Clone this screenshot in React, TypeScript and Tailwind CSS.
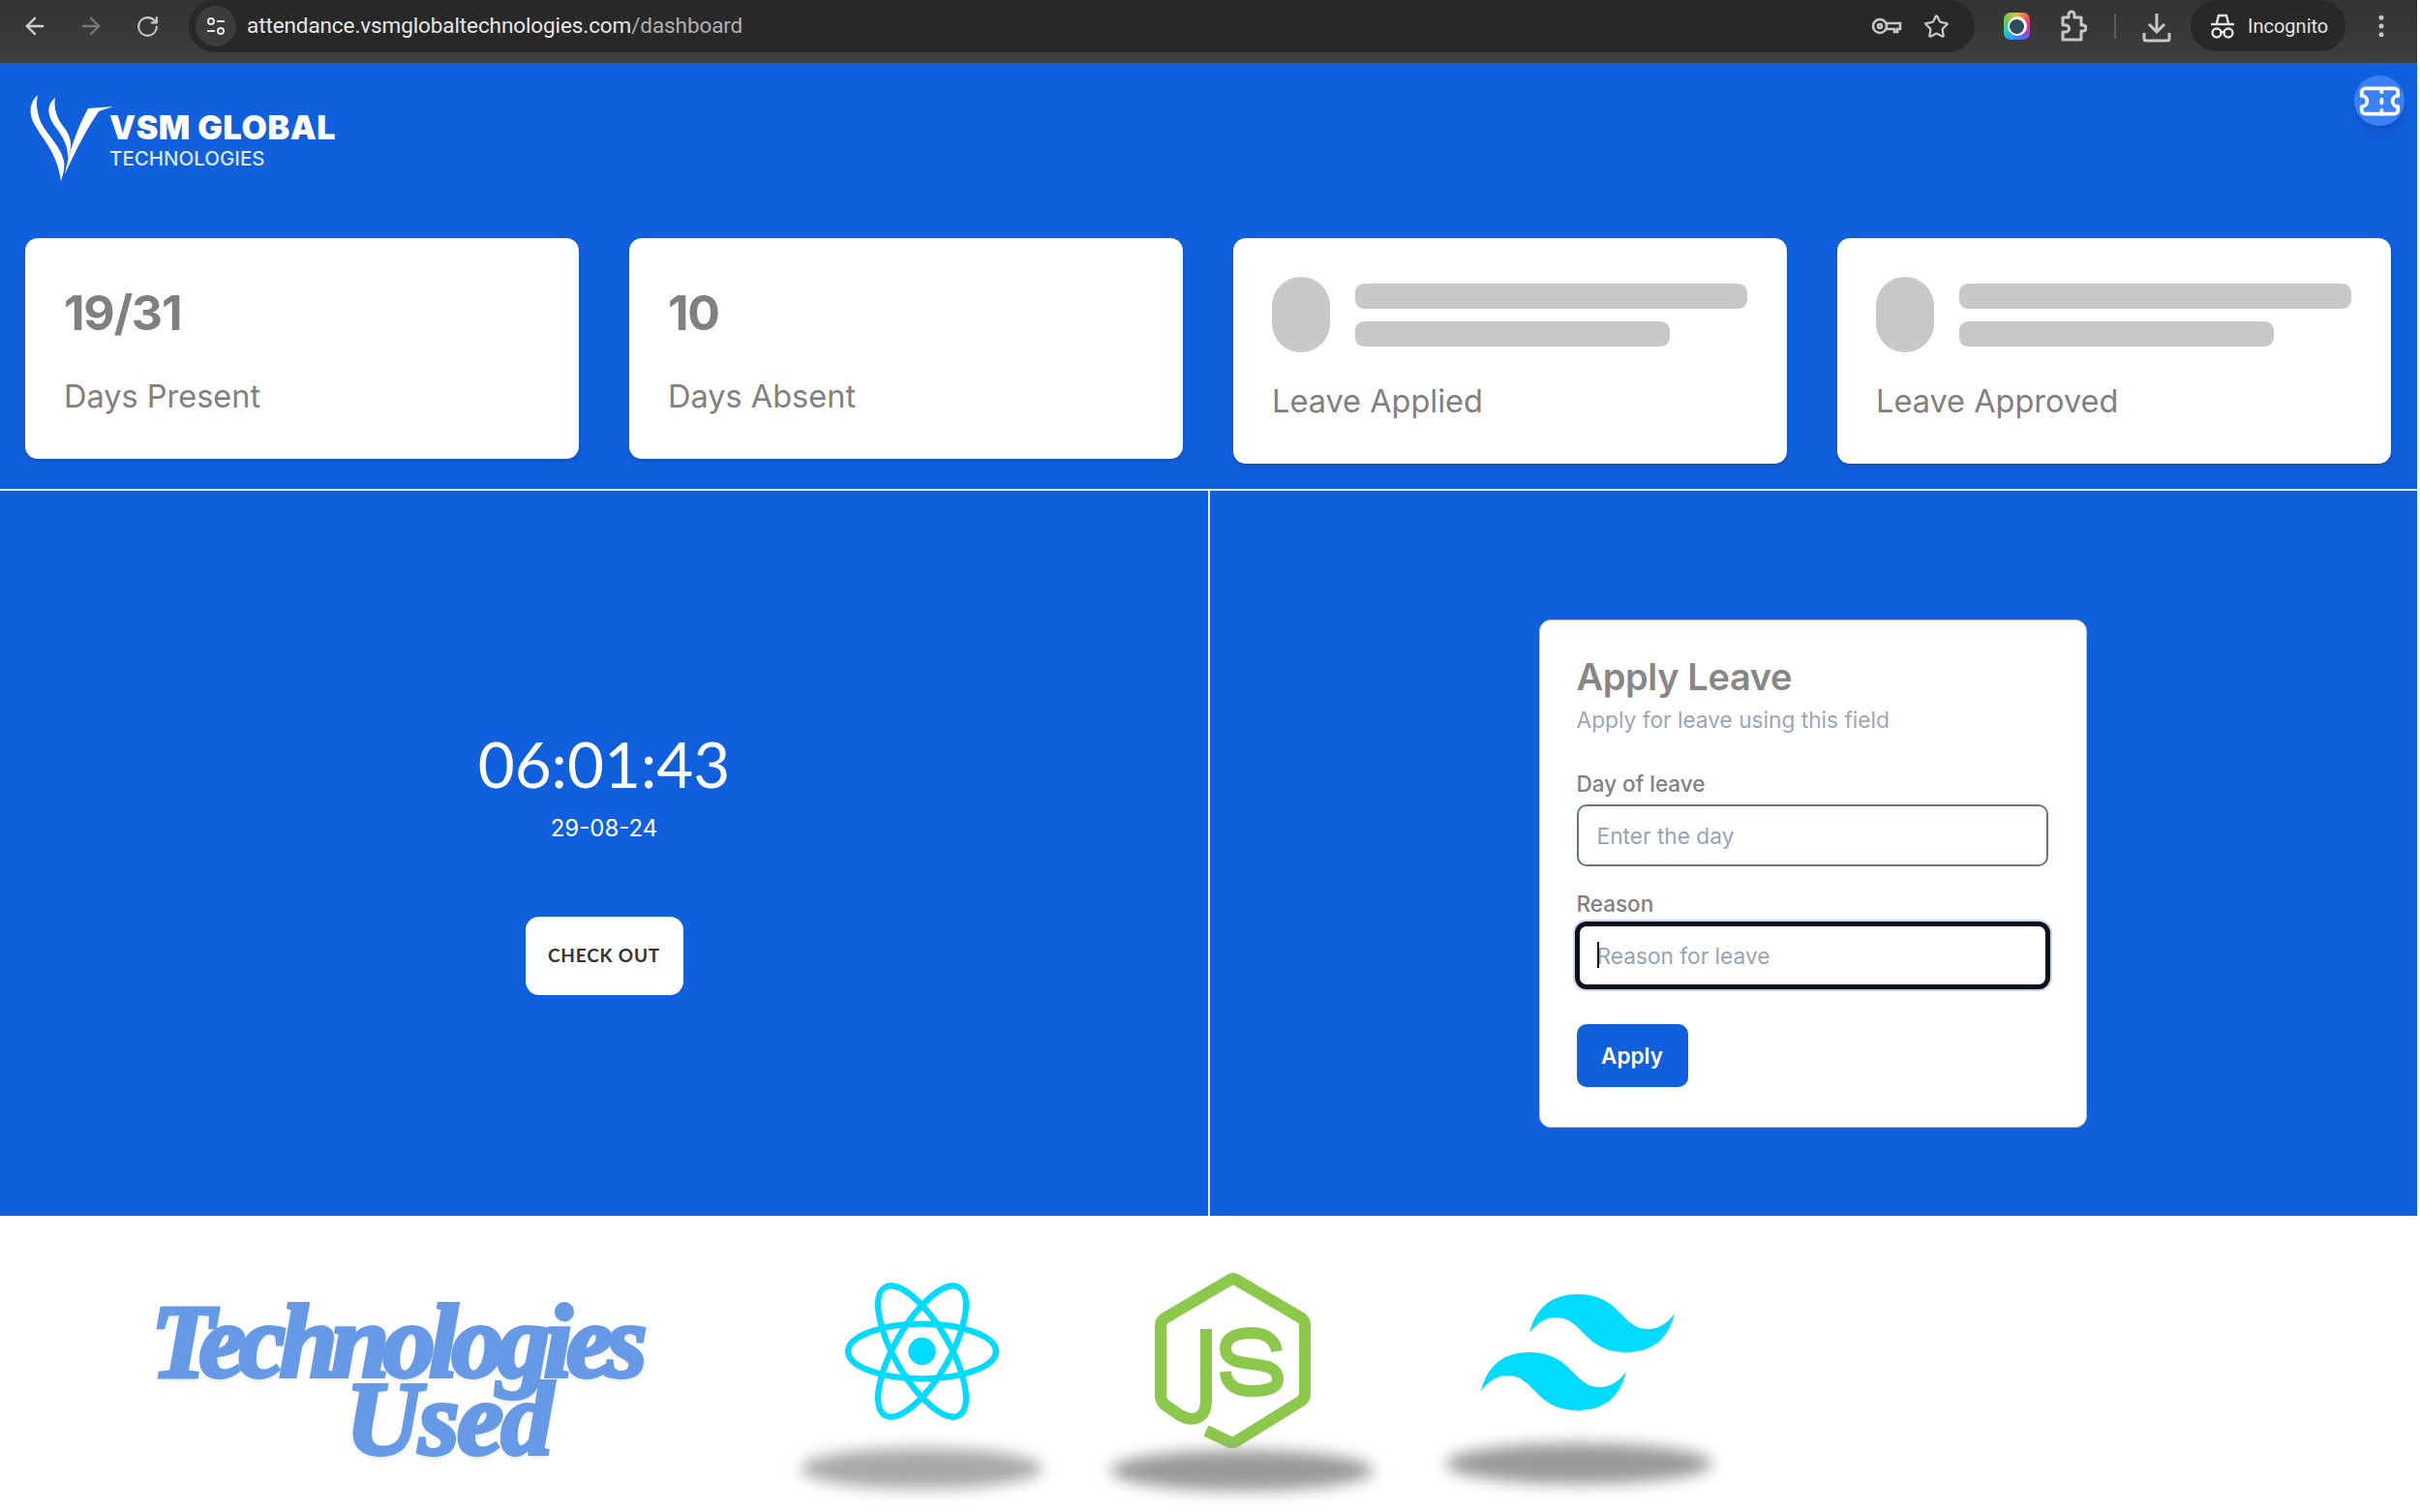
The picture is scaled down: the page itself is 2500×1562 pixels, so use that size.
import { ArrowLeft, ArrowRight, EllipsisVertical, RotateCw, Star, Ticket } from "lucide-react";

function SiteInfoIcon() {
  return (
    <svg width="24" height="24" viewBox="0 0 24 24" fill="none" stroke="#e3e3e3" strokeWidth="2">
      <circle cx="7" cy="7" r="3" />
      <path d="M13 7h8" />
      <circle cx="17" cy="17" r="3" />
      <path d="M3 17h8" />
    </svg>
  );
}

function KeyIcon() {
  return (
    <svg width="32" height="22" viewBox="0 0 32 22" fill="none" stroke="#c7c7c7" strokeWidth="2.6">
      <circle cx="9" cy="11" r="7" />
      <circle cx="9" cy="11" r="2" />
      <path d="M16 8h14v6h-3v3h-3v-3h-8" />
    </svg>
  );
}

function ExtensionIcon() {
  return (
    <svg width="28" height="34" viewBox="0 0 28 34" fill="none" stroke="#c7c7c7" strokeWidth="3" strokeLinejoin="round">
      <path d="M3 8h6V5a3 3 0 0 1 6 0v3h7v8h2a3 3 0 0 1 0 6h-2v9H3v-8h3a3 3 0 0 0 0-7H3V8z" />
    </svg>
  );
}

function DownloadIcon() {
  return (
    <svg width="30" height="32" viewBox="0 0 30 32" fill="none" stroke="#c7c7c7" strokeWidth="3">
      <path d="M15 2v18M7 13l8 8 8-8" />
      <path d="M2 22v6a2 2 0 0 0 2 2h22a2 2 0 0 0 2-2v-6" />
    </svg>
  );
}

function IncognitoIcon() {
  return (
    <svg width="26" height="28" viewBox="0 0 26 28" fill="none" stroke="#e3e3e3" strokeWidth="2.4">
      <path d="M7 11l2-8h8l2 8" />
      <path d="M1 12h24" />
      <circle cx="7" cy="21" r="4.5" />
      <circle cx="19" cy="21" r="4.5" />
      <path d="M11.5 20h3" />
    </svg>
  );
}

function BrowserBar() {
  return (
    <div className="flex h-[65px] items-start bg-gradient-to-b from-[#333333] to-[#3e3e3e] font-['Roboto',sans-serif]">
      <div className="flex h-[54px] w-[195px] items-center pl-[22px]">
        <ArrowLeft size={28} color="#d0d0d0" />
        <ArrowRight size={28} color="#777777" className="ml-[30px]" />
        <RotateCw size={25} color="#c7c7c7" className="ml-[32px]" />
      </div>
      <div className="flex h-[54px] w-[1845px] items-center rounded-r-[27px] rounded-l-[27px] bg-[#282828] pl-[7px] pr-[24px]">
        <div className="flex h-[42px] w-[42px] items-center justify-center rounded-full bg-[#3c3c3c]">
          <SiteInfoIcon />
        </div>
        <div className="ml-[11px] flex-1 text-[22.5px] tracking-[-0.1px] text-[#e6e6e6]">
          attendance.vsmglobaltechnologies.com<span className="text-[#b0b0b0]">/dashboard</span>
        </div>
        <KeyIcon />
        <Star size={27} color="#c7c7c7" strokeWidth={2} className="ml-[22px] mr-[2px]" />
      </div>
      <div className="ml-[30px] mt-[13px] flex h-[28px] w-[27px] items-center justify-center rounded-[7px] bg-[conic-gradient(#f7b733,#f0435d,#a13fd6,#3b82f6,#22c9c9,#5fd04f,#f7b733)]">
        <div className="flex h-[20px] w-[20px] items-center justify-center rounded-full bg-white">
          <div className="h-[15px] w-[15px] rounded-full bg-[#2d4a5e]" />
        </div>
      </div>
      <div className="ml-[31px] mt-[10px]">
        <ExtensionIcon />
      </div>
      <div className="ml-[28px] mt-[14px] h-[26px] w-[2px] bg-[#5c5c5c]" />
      <div className="ml-[27px] mt-[12px]">
        <DownloadIcon />
      </div>
      <div className="ml-[20px] flex h-[53px] w-[160px] items-center rounded-[27px] bg-[#282828] pl-[20px]">
        <IncognitoIcon />
        <span className="ml-[13px] text-[20px] text-[#e3e3e3]">Incognito</span>
      </div>
      <EllipsisVertical size={30} color="#c7c7c7" className="ml-[22px] mt-[12px]" />
    </div>
  );
}

function BrandLogo() {
  return (
    <div className="flex items-start">
      <svg width="90" height="90" viewBox="0 0 90 90" fill="white">
        <path d="M62 14 L88 12 L73 17 C60 36 50 56 38 82 C42 60 50 36 62 14 Z" />
        <path d="M10 0 C1 8 0 20 8 33 C16 47 30 60 34 89 C37 80 38 74 37 68 C33 52 20 42 13 28 C9 18 8 8 10 0 Z" />
        <path d="M28 3 C19 10 20 20 26 30 C33 40 42 50 41 66 C47 52 44 42 36 32 C30 24 26 14 28 3 Z" />
      </svg>
      <div className="ml-[-6px] mt-[16px] font-['Inter',sans-serif] text-white">
        <div className="text-[34px] font-black leading-[36px] tracking-[0.6px] whitespace-nowrap">VSM GLOBAL</div>
        <div className="mt-[4px] text-[20.5px] font-medium leading-[20px] text-[#dbe7ff]">TECHNOLOGIES</div>
      </div>
    </div>
  );
}

function StatCard({ value, label }: { value: string; label: string }) {
  return (
    <div className="h-[228px] w-[572px] rounded-[13px] bg-white p-[40px] shadow-md">
      <div className="mt-[7px] text-[50px] font-bold leading-[60px] tracking-[-1.2px] text-[#808080]">{value}</div>
      <div className="mt-[37px] text-[32.5px] leading-[40px] text-[#808080]">{label}</div>
    </div>
  );
}

function LoadingCard({ label }: { label: string }) {
  return (
    <div className="h-[233px] w-[572px] rounded-[13px] bg-white p-[40px] shadow-md">
      <div className="flex gap-[26px]">
        <div className="h-[78px] w-[60px] rounded-full bg-[#c8c8c8]" />
        <div className="flex flex-1 flex-col gap-[13px] pt-[7px]">
          <div className="h-[26px] w-[405px] rounded-[9px] bg-[#c8c8c8]" />
          <div className="h-[26px] w-[325px] rounded-[9px] bg-[#c8c8c8]" />
        </div>
      </div>
      <div className="mt-[31px] text-[32.5px] leading-[40px] text-[#808080]">{label}</div>
    </div>
  );
}

function ClockPanel() {
  return (
    <div className="flex flex-col items-center border-r-2 border-[#e4ecfb] pt-[242px]">
      <div className="font-['Lato',sans-serif] text-[65.5px] leading-[80px] text-white">06:01:43</div>
      <div className="mt-[11px] text-[24px] leading-[32px] text-white">29-08-24</div>
      <button className="mt-[75px] h-[81px] w-[163px] rounded-[14px] bg-white font-['Lato',sans-serif] text-[19px] font-bold tracking-[0.8px] text-[#333333]">
        CHECK OUT
      </button>
    </div>
  );
}

function LeaveForm() {
  return (
    <div className="flex justify-center pr-[2px] pt-[133px]">
      <div className="h-[525px] w-[566px] rounded-[12px] border border-[#b9c0cc] bg-white px-[38px] pt-[34px]">
        <div className="text-[38px] font-semibold leading-[48px] tracking-[-0.4px] text-[#878787]">Apply Leave</div>
        <div className="mt-[4px] text-[22.7px] leading-[34px] text-[#9aa6b8]">Apply for leave using this field</div>
        <div className="mt-[35px] text-[22.5px] font-medium leading-[28px] text-[#808080]">Day of leave</div>
        <input
          placeholder="Enter the day"
          className="mt-[7px] block h-[64px] w-[487px] rounded-[10px] border-2 border-[#6b7280] bg-white px-[19px] text-[22.7px] placeholder:text-[#94a3b8]"
        />
        <div className="mt-[25px] text-[22.5px] font-medium leading-[28px] text-[#808080]">Reason</div>
        <div className="relative mt-[4px]">
          <input
            placeholder="Reason for leave"
            className="ml-[-2px] block h-[70px] w-[491px] rounded-[12px] border-[5px] border-[#0b1020] bg-white px-[18px] text-[22.7px] ring-2 ring-[#cbd5e1] placeholder:text-[#94a3b8]"
          />
          <div className="absolute left-[21px] top-[21px] h-[27px] w-[2px] bg-[#111827]" />
        </div>
        <button className="mt-[36px] h-[65px] w-[115px] rounded-[10px] bg-[#105fdd] text-[22.5px] font-semibold text-white">
          Apply
        </button>
      </div>
    </div>
  );
}

function ReactLogo() {
  return (
    <svg width="159" height="142" viewBox="-101 -90 202 180" fill="none" stroke="#00dbff" strokeWidth="8">
      <ellipse rx="97" ry="36" />
      <ellipse rx="97" ry="36" transform="rotate(60)" />
      <ellipse rx="97" ry="36" transform="rotate(120)" />
      <circle r="18" fill="#00dbff" stroke="none" />
    </svg>
  );
}

function NodeLogo() {
  return (
    <svg width="162" height="182" viewBox="0 0 162 182" fill="none" stroke="#8cc84b" strokeWidth="12" strokeLinejoin="round">
      <path d="M53 163 L78 175 Q81 176 84 174 L150 133 Q155 130 155 125 L155 54 Q155 50 152 47 L84 7 Q81 5 78 7 L10 47 Q6 50 6 54 L6 127 Q6 132 10 136 L26 147 C40 155 53 150 53 132 L53 58" />
      <path d="M126 81 C124 68 114 62 100 62 C84 62 73 67 73 78 C73 90 84 92 100 94 C118 96 127 99 127 110 C127 118 118 122 100 122 C84 122 74 116 73 102" />
    </svg>
  );
}

function TailwindLogo() {
  return (
    <svg width="200" height="120" viewBox="0 0 54 32.4" fill="#00dbff" preserveAspectRatio="none">
      <path d="M27 0c-7.2 0-11.7 3.6-13.5 10.8 2.7-3.6 5.85-4.95 9.45-4.05 2.054.513 3.522 2.004 5.147 3.653C30.744 13.09 33.808 16.2 40.5 16.2c7.2 0 11.7-3.6 13.5-10.8-2.7 3.6-5.85 4.95-9.45 4.05-2.054-.513-3.522-2.004-5.147-3.653C36.756 3.11 33.692 0 27 0zM13.5 16.2C6.3 16.2 1.8 19.8 0 27c2.7-3.6 5.85-4.95 9.45-4.05 2.054.514 3.522 2.004 5.147 3.653C17.244 29.29 20.308 32.4 27 32.4c7.2 0 11.7-3.6 13.5-10.8-2.7 3.6-5.85 4.95-9.45 4.05-2.054-.513-3.522-2.004-5.147-3.653C23.256 19.31 20.192 16.2 13.5 16.2z" />
    </svg>
  );
}

function TechFooter() {
  return (
    <div className="flex h-[306px] bg-white">
      <div className="ml-[156px] w-[512px] pt-[90px] font-['Liberation_Serif',serif] text-[108px] font-bold italic leading-[80px] tracking-[-6.5px] text-[#6699e6] [-webkit-text-stroke:4px_#6699e6] [text-shadow:0_3px_6px_rgba(0,0,0,0.12)]">
        <div className="whitespace-nowrap">Technologies</div>
        <div className="pl-[201px] tracking-[-2.5px]">Used</div>
      </div>

      <div className="ml-[155px] flex w-[258px] flex-col items-center pt-[69px]">
        <ReactLogo />
        <div className="mt-[29px] h-[42px] w-[250px] rounded-[50%] bg-[#a8a8a8] blur-[8px]" />
      </div>

      <div className="ml-[66px] flex w-[276px] flex-col pt-[59px]">
        <div className="ml-[46px]">
          <NodeLogo />
        </div>
        <div className="mt-[1px] h-[42px] w-[272px] rounded-[50%] bg-[#999999] blur-[8px]" />
      </div>

      <div className="ml-[70px] flex w-[280px] flex-col pt-[81px]">
        <div className="ml-[37px]">
          <TailwindLogo />
        </div>
        <div className="mt-[34px] h-[42px] w-[276px] rounded-[50%] bg-[#999999] blur-[8px]" />
      </div>
    </div>
  );
}

export default function App() {
  return (
    <div className="flex h-[1562px] w-[2497px] flex-col overflow-hidden bg-[#105fdd] font-['Inter',sans-serif]">
      <BrowserBar />
      <div className="flex h-[181px] items-start justify-between pl-[29px] pr-[13px] pt-[33px]">
        <BrandLogo />
        <div className="mt-[-20px] flex h-[52px] w-[52px] items-center justify-center rounded-full bg-[#3b82f6] shadow-lg">
          <Ticket size={45} color="white" strokeWidth={2} />
        </div>
      </div>
      <div className="flex h-[261px] items-start gap-[52px] border-b-2 border-[#e4ecfb] px-[26px]">
        <StatCard value="19/31" label="Days Present" />
        <StatCard value="10" label="Days Absent" />
        <LoadingCard label="Leave Applied" />
        <LoadingCard label="Leave Approved" />
      </div>
      <div className="grid h-[749px] grid-cols-[1250px_1fr]">
        <ClockPanel />
        <LeaveForm />
      </div>
      <TechFooter />
    </div>
  );
}
